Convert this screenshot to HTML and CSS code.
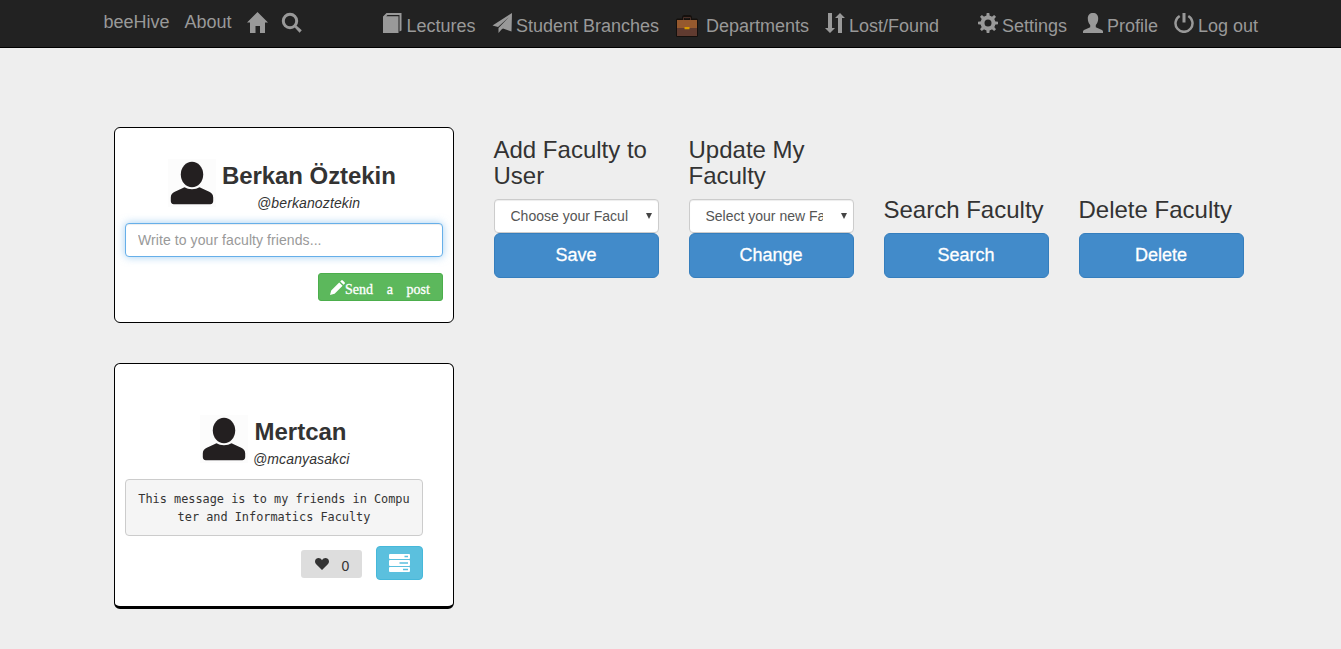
FILE: index.html
```html
<!DOCTYPE html>
<html lang="en">
<head>
<meta charset="utf-8">
<title>beeHive</title>
<link rel="stylesheet" href="styles.css">
</head>
<body>
<svg class="defs" width="0" height="0">
  <symbol id="avatar" viewBox="0 0 48 48">
    <rect width="48" height="48" fill="#fcfcfc"/>
    <path d="M2.800 42v-3.500c0-3 1.500-4.500 4-5.800l9.700-4.500c4 2.600 11 2.600 15 0l9.700 4.500c2.500 1.300 4 2.800 4 5.800V42c0 2-1 3.200-3 3.200H5.800c-2 0-3-1.200-3-3.200z" fill="#231f20"/>
    <ellipse cx="24" cy="15.500" rx="11.200" ry="12.800" fill="#231f20"/>
  </symbol>
</svg>
<nav class="navbar">
  <a class="nav-item brand">beeHive</a>
  <a class="nav-item about">About</a>
  <a class="nav-item home"><svg class="icon" viewBox="0 0 21 21"><path d="M10.500 0L21 10.500h-3V21h-5v-7H8.500v7H3V10.500H0L10.500 0z"/></svg></a>
  <a class="nav-item search"><svg class="icon" viewBox="0 0 21 21"><circle cx="9" cy="9" r="6.700" fill="none" stroke="#999" stroke-width="3"/><path d="M13 14.800l1.800-1.800 6 5.300-2.200 2.500z"/></svg></a>
  <a class="nav-item lectures"><svg class="icon" viewBox="0 0 20 20"><path d="M1 3.500L4.500 0h15v17.500l-2 1V2H5.500L4.200 3.200H16.500V20H1z"/></svg><span>Lectures</span></a>
  <a class="nav-item branches"><svg class="icon" viewBox="0 0 20 20"><path d="M20 0L.5 12.500l5.500 1.600L17 4 6.500 15v5l3-3.400 1.500-1 8.500 2.900z"/></svg><span>Student Branches</span></a>
  <a class="nav-item departments"><svg class="icon case" viewBox="0 0 22 22"><rect y="3.500" width="22" height="18.500" rx="1.500" fill="#15100d"/><path d="M7.500 5V2.500q0-1 1-1h5q1 0 1 1V5" fill="none" stroke="#15100d" stroke-width="3"/><path d="M7.500 5V2.500h7V5" fill="none" stroke="#4b3028" stroke-width="1"/><path d="M1 5h20v8H1z" fill="#96592e"/><path d="M1 13h20v8H1z" fill="#603b30"/><rect x="8.500" y="12" width="5" height="2.200" rx=".5" fill="#d89b00"/></svg><span>Departments</span></a>
  <a class="nav-item lost"><svg class="icon" viewBox="0 0 20 20"><path d="M3 0h4v15h3l-5 5-5-5h3zM13 20V5h-3l5-5 5 5h-3v15z"/></svg><span>Lost/Found</span></a>
  <a class="nav-item settings"><svg class="icon" viewBox="0 0 20 20"><circle cx="10" cy="10" r="5.500" fill="none" stroke="#999" stroke-width="4"/><g><path id="tooth" d="M8.200 4l.5-4h2.600l.5 4z"/><use href="#tooth" transform="rotate(45 10 10)"/><use href="#tooth" transform="rotate(90 10 10)"/><use href="#tooth" transform="rotate(135 10 10)"/><use href="#tooth" transform="rotate(180 10 10)"/><use href="#tooth" transform="rotate(225 10 10)"/><use href="#tooth" transform="rotate(270 10 10)"/><use href="#tooth" transform="rotate(315 10 10)"/></g></svg><span>Settings</span></a>
  <a class="nav-item profile"><svg class="icon" viewBox="0 0 20 20"><path d="M10 0c3.300 0 5.200 2 5.200 5.500 0 3-1 5-2.400 6.500v2.200L19 17q1 .5 1 1.500V20H0v-1.500Q0 17.500 1 17l6.200-2.800V12C5.800 10.500 4.800 8.500 4.800 5.500 4.800 2 6.700 0 10 0z"/></svg><span>Profile</span></a>
  <a class="nav-item logout"><svg class="icon" viewBox="0 0 20 20"><path d="M5.700 3a8.500 8.500 0 1 0 8.600 0" fill="none" stroke="#999" stroke-width="2.500"/><path d="M8.500 0h3v9.500h-3z"/></svg><span>Log out</span></a>
</nav>
<main class="page">
  <section class="feed">
    <article class="card composer">
      <header class="person">
        <svg class="avatar"><use href="#avatar"/></svg>
        <h3>Berkan Öztekin</h3>
      </header>
      <em class="handle">@berkanoztekin</em>
      <input class="post-input" type="text" placeholder="Write to your faculty friends...">
      <button class="send"><svg viewBox="0 0 15 15"><path d="M0 15l1.200-4.600L9.200 2.400l3.400 3.400-8 8zM10.200 1.400l1-1q.8-.7 1.600 0l1.800 1.800q.7.800 0 1.600l-1 1z"/></svg><span>Send a post</span></button>
    </article>
    <article class="card post">
      <header class="person">
        <svg class="avatar"><use href="#avatar"/></svg>
        <h3>Mertcan</h3>
      </header>
      <em class="handle">@mcanyasakci</em>
      <pre class="message">This message is to my friends in Compu
ter and Informatics Faculty</pre>
      <div class="actions">
        <button class="like"><svg viewBox="0 0 14 12"><path d="M7 12L1.200 6.300C-.5 4.500-.3 2 1.300.8 3.200-.6 5.800.1 7 2.200 8.200.1 10.800-.6 12.700.8c1.600 1.200 1.800 3.700.1 5.500z"/></svg><span>0</span></button>
        <button class="comments"><svg viewBox="0 0 21 18"><rect width="21" height="5" rx="1"/><rect y="6" width="21" height="6" rx="1"/><rect y="13" width="21" height="5" rx="1"/><path d="M15.500 2.500H19M10.500 9H19M14 15.500h5" stroke="#5bc0de" stroke-width="1.300"/></svg></button>
      </div>
    </article>
  </section>
  <section class="faculty">
    <form class="column"><h3>Add Faculty to User</h3><div class="select"><span>Choose your Faculty</span><i></i></div><button type="button" class="primary">Save</button></form>
    <form class="column"><h3>Update My Faculty</h3><div class="select"><span>Select your new Faculty</span><i></i></div><button type="button" class="primary">Change</button></form>
    <form class="column"><h3>Search Faculty</h3><button type="button" class="primary">Search</button></form>
    <form class="column"><h3>Delete Faculty</h3><button type="button" class="primary">Delete</button></form>
  </section>
</main>
</body>
</html>
```
FILE: styles.css
```css
* { box-sizing: border-box; }
body { margin: 0; background: #eee; color: #333; font: 14px/20px "Liberation Sans", Arial, sans-serif; height: 649px; overflow: hidden; }
h3 { margin: 0; font-size: 24px; line-height: 26px; font-weight: 400; }
button { font-family: inherit; margin: 0; }
.defs { display: block; }

.navbar { display: flex; align-items: flex-start; height: 48px; padding: 12px 0 0 103.5px; background: #222; border-bottom: 1px solid #000; color: #999; font-size: 18px; }
.nav-item { display: flex; flex: none; white-space: nowrap; }
.nav-item .icon { width: 20px; height: 20px; fill: #999; margin: 1px 4.5px 0 0; flex: none; }
.nav-item .icon + span { padding-top: 4px; }
.brand { width: 81px; }
.about { width: 62.5px; }
.home { width: 34px; }
.home .icon, .search .icon { width: 21px; height: 21px; margin-top: 0; }
.search { width: 101px; }
.lectures { width: 109.5px; }
.branches { width: 184.5px; }
.departments { width: 148.5px; }
.departments .case { width: 22px; height: 22px; margin: 3px 8px 0 0; }
.lost { width: 153px; }
.settings { width: 105px; }
.profile { width: 91px; }

.page { display: flex; align-items: flex-start; gap: 39.5px; padding: 79px 0 0 114px; }
.feed { width: 340px; display: flex; flex-direction: column; gap: 40px; }
.card { display: flex; flex-direction: column; background: #fff; border: 1px solid #000; border-radius: 6px; padding: 31px 10px 0; }
.composer { height: 196px; }
.post { height: 246px; padding: 51px 30px 0 10px; border-bottom-width: 3px; }
.person { display: flex; height: 34px; padding-left: 43px; gap: 6px; }
.person h3 { font-weight: 700; padding-top: 4px; letter-spacing: -.07px; }
.post .person { padding-left: 75px; }
.post .person h3 { letter-spacing: 0; padding-left: .5px; }
.avatar { width: 48px; height: 48px; flex: none; }
.handle { line-height: 20px; margin-left: 132px; letter-spacing: .12px; }
.post .handle { margin-left: 128px; }
.post-input { height: 34px; width: 318px; margin-top: 10px; padding: 6px 12px; border: 1px solid #66afe9; border-radius: 4px; outline: 0; font: 14px/20px "Liberation Sans", Arial, sans-serif; letter-spacing: .08px; box-shadow: inset 0 1px 1px rgba(0,0,0,.075), 0 0 8px rgba(102,175,233,.6); }
.post-input::placeholder { color: #999; opacity: 1; }
.send { display: flex; align-self: flex-end; width: 125px; height: 28px; margin-top: 16px; padding: 6px 0 0 11px; background: #5cb85c; border: 1px solid #4cae4c; border-radius: 3px; color: #fff; font: 14px/20px "Liberation Serif", serif; word-spacing: 10.2px; white-space: nowrap; -webkit-text-stroke: .3px; }
.send svg { width: 15px; height: 15px; fill: #fff; flex: none; }
.message { height: 57px; margin: 10px 0 0; padding: 10px 0 0; text-align: center; background: #f5f5f5; border: 1px solid #ccc; border-radius: 4px; font: 11.87px/18px "DejaVu Sans Mono", monospace; }
.actions { display: flex; justify-content: flex-end; align-items: center; gap: 14px; margin-top: 10px; }
.like { display: flex; width: 61px; height: 28px; margin-top: 2px; padding: 8px 0 0 14px; background: #ddd; border: 0; border-radius: 3px; color: #333; font-size: 14px; line-height: 16px; }
.like svg { width: 14px; height: 12px; fill: #333; margin-right: 12.5px; }
.comments { display: flex; align-items: center; justify-content: center; width: 47px; height: 34px; padding: 0; background: #5bc0de; border: 1px solid #46b8da; border-radius: 4px; }
.comments svg { width: 21px; height: 18px; fill: #fff; }

.faculty { display: flex; align-items: flex-end; gap: 30px; height: 151px; }
.column { width: 165px; }
.column h3 { margin-bottom: 10px; }
.select { display: flex; align-items: center; justify-content: space-between; height: 34px; padding: 0 6px 0 16px; background: #fff; border: 1px solid #ccc; border-radius: 4px; color: #555; box-shadow: inset 0 1px 1px rgba(0,0,0,.075); }
.select span { width: 117px; overflow: hidden; white-space: nowrap; }
.select i { border: 3px solid transparent; border-top: 6px solid #444; border-bottom: 0; }
.primary { display: block; width: 165px; height: 45px; padding: 0 0 1px; background: #428bca; border: 1px solid #357ebd; border-radius: 6px; color: #fff; font-size: 18px; line-height: 24px; -webkit-text-stroke: .3px; }
```
